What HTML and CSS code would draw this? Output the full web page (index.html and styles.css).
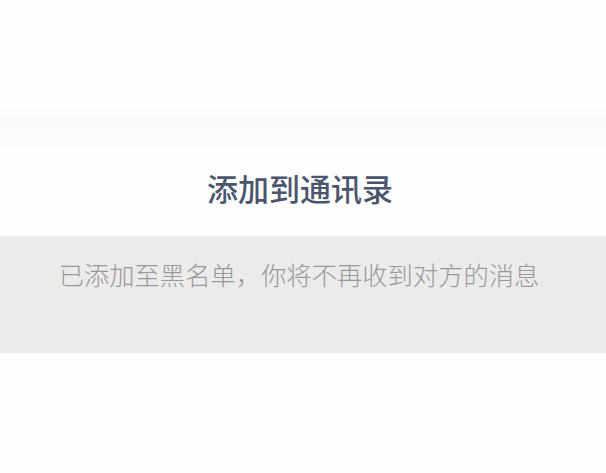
FILE: index.html
```html
<!DOCTYPE html>
<html lang="zh-CN">
<head>
    <meta charset="UTF-8">
    <meta name="viewport" content="width=device-width, initial-scale=1.0">
    <title>添加到通讯录</title>
    <link rel="stylesheet" href="styles.css">
</head>
<body>
    <div class="page">
        <div class="top-space"></div>
        <div class="blur-strip"></div>
        <div class="title-row">
            <span class="add-contact">添加到通讯录</span>
        </div>
        <div class="notice">
            <span class="notice-text">已添加至黑名单，你将不再收到对方的消息</span>
        </div>
    </div>
</body>
</html>
```

FILE: styles.css
```css
/* General */
body {
    margin: 0;
    background: #fefefe;
    font-family: "Noto Sans CJK SC", "Noto Sans", sans-serif;
}

.page {
    display: flex;
    flex-direction: column;
    height: 473px;
}

.top-space {
    height: 106px;
}

/* faint blurred strip */
.blur-strip {
    height: 44px;
    background: linear-gradient(180deg, #fefefe, #fafafb 40%, #fcfcfc 80%, #fefefe);
}

/* Title */
.title-row {
    height: 86px;
    display: flex;
    justify-content: center;
    align-items: center;
    padding: 0 6px 12px 0;
    box-sizing: border-box;
}

.add-contact {
    font-size: 31px;
    font-weight: 500;
    color: #4b566d;
}

/* Grey notice */
.notice {
    height: 117px;
    background: #ebebeb;
    display: flex;
    justify-content: center;
    padding: 19px 8px 0 0;
    box-sizing: border-box;
}

.notice-text {
    font-size: 25.3px;
    font-weight: 300;
    color: #999;
    line-height: 38px;
}
```
